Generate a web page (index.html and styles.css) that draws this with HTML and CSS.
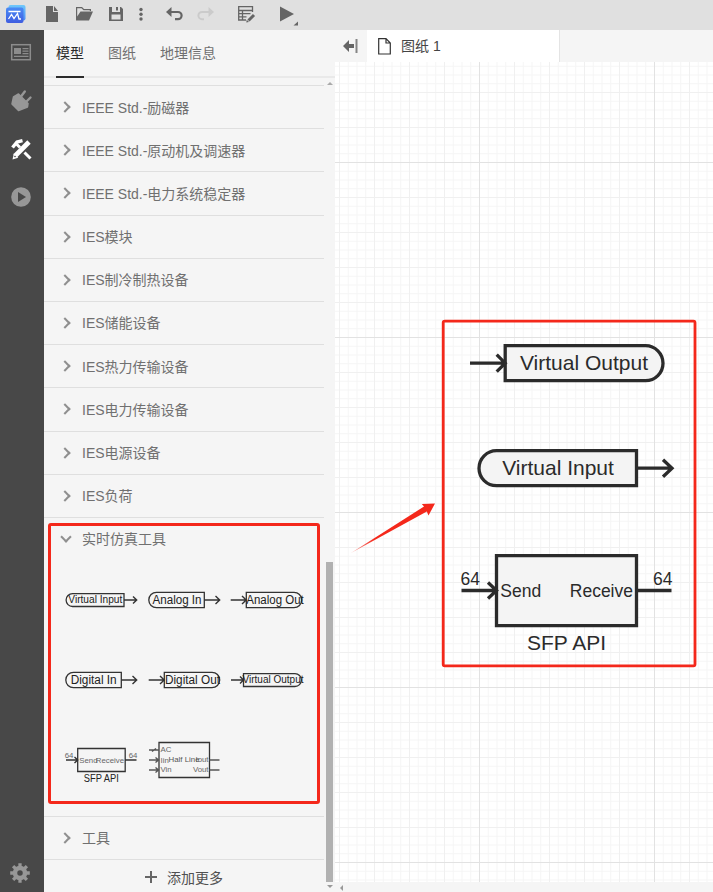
FILE: index.html
```html
<!DOCTYPE html>
<html lang="zh-CN">
<head>
<meta charset="utf-8">
<title>模型</title>
<link rel="stylesheet" href="styles.css">
</head>
<body>
<div class="app">
  <header class="toolbar">
    <svg width="310" height="30" viewBox="0 0 310 30">
      <defs>
        <linearGradient id="logo-back" x1="0" y1="0" x2="0" y2="1"><stop offset="0" stop-color="#6fc8fa"/><stop offset="1" stop-color="#4d8df5"/></linearGradient>
        <linearGradient id="logo-front" x1="0" y1="0" x2="0" y2="1"><stop offset="0" stop-color="#4a8bf5"/><stop offset="1" stop-color="#3f5de0"/></linearGradient>
      </defs>
      <rect x="8.500" y="5" width="17" height="15.500" rx="2" fill="url(#logo-back)"/>
      <rect x="6" y="7.500" width="17.500" height="15.500" rx="2" fill="url(#logo-front)"/>
      <path d="M8.500 11.500H20.500M8.500 19l3-4.500 2.500 4 3.500-5 1.500 5.500h2" fill="none" stroke="#fff" stroke-width="1.300"/>
      <g fill="#656565">
        <path d="M46 6h7v6h5v10H46zM54 6l4 5h-4z"/>
        <path d="M76 7h6l2 2h7v2h-1.200v-.8h-6.300l-2-2H77.200v8.300L80.500 11.500h12.500L89 20.500H76z"/>
        <path d="M109 7h12l2 2v12h-14zM112 7v5h8V7h-2v3.500h-2V7zM111.500 14.500v5h9v-5z" fill-rule="evenodd"/>
        <circle cx="141" cy="9.500" r="1.700"/><circle cx="141" cy="14.300" r="1.700"/><circle cx="141" cy="19" r="1.700"/>
        <path d="M166 12l5.500-5v10z"/>
        <path d="M280 6.500v15L294 14zM298 21.500v4h-4.500z"/>
      </g>
      <path d="M170 12h8a3.600 3.600 0 0 1 0 7.200H175" fill="none" stroke="#656565" stroke-width="2.200"/>
      <path d="M214 12l-5.500-5v10z" fill="#cbcbcb"/>
      <path d="M210 12h-8a3.600 3.600 0 0 0 0 7.200h2" fill="none" stroke="#cbcbcb" stroke-width="2"/>
      <g fill="none" stroke="#656565" stroke-width="1.300">
        <path d="M252.500 12V6.700h-13.800v13.300H246M238.500 10.500h14M242.500 10.500v9.500M238.500 13.700h12M238.500 16.800h8"/>
        <path d="M248.500 20.500l5.500-5.500" stroke-width="3"/>
        <path d="M246.300 22.500l.4-2.800 2.300 2.300z" fill="#656565" stroke="none"/>
      </g>
    </svg>
  </header>

  <div class="workspace">
    <nav class="rail">
      <svg width="44" height="190" viewBox="0 30 44 190">
        <rect x="11.700" y="44.700" width="18.600" height="15" fill="none" stroke="#8c8c8c" stroke-width="1.500"/>
        <path d="M14 48h7v6h-7zM22.500 48h6v1.300h-6zM22.500 50.500h6v1.300h-6zM22.500 53h6v1.300h-6zM14 55.700h14.500V57H14z" fill="#8c8c8c"/>
        <path d="M18.500 94l9.500 9.500-.5 3.500-9 3.500-6.500-6.500 1.500-7z" fill="#979797" stroke="#979797" stroke-width="1.500" stroke-linejoin="round"/>
        <path d="M21 96.500L24.800 91.500M26.500 101.500l4-4" stroke="#979797" stroke-width="2.400" stroke-linecap="round"/>
        <g fill="none" stroke="#fff">
          <path d="M16.500 144l3.500 3.500M24.500 152.500l6 6" stroke-width="3"/>
          <path d="M12.500 147.500l4.500-5.500 5.500-1.300" stroke-width="3.400"/>
          <path d="M29 142L15 156" stroke-width="4.800"/>
          <path d="M12.500 159.500l1.300-6 4.400 4.200z" fill="#fff" stroke="none"/>
          <circle cx="15" cy="156.500" r=".6" fill="#484848" stroke="#484848" stroke-width=".5"/>
        </g>
        <circle cx="21" cy="197" r="9.800" fill="#979797"/><path d="M18 192v10l8-5z" fill="#484848"/>
      </svg>
      <svg class="gear" width="44" height="38" viewBox="0 854 44 38">
        <g transform="translate(20 873)" stroke="#979797" fill="none">
          <circle r="5" stroke-width="4.500"/>
          <path d="M0-9.800V-6M0 9.800V6M-9.800 0H-6M9.800 0H6M-6.900-6.900l2.500 2.500M6.900 6.900L4.400 4.400M-6.900 6.900l2.500-2.500M6.900-6.900L4.400-4.400" stroke-width="3.300"/>
        </g>
      </svg>
    </nav>

    <aside class="panel">
      <div class="tabs"><span class="tab active">模型</span><span class="tab">图纸</span><span class="tab">地理信息</span></div>
      <div class="scroller">
        <div class="list">
          <div class="row"><i class="chev"></i>IEEE Std.-励磁器</div>
          <div class="row"><i class="chev"></i>IEEE Std.-原动机及调速器</div>
          <div class="row"><i class="chev"></i>IEEE Std.-电力系统稳定器</div>
          <div class="row"><i class="chev"></i>IES模块</div>
          <div class="row"><i class="chev"></i>IES制冷制热设备</div>
          <div class="row"><i class="chev"></i>IES储能设备</div>
          <div class="row"><i class="chev"></i>IES热力传输设备</div>
          <div class="row"><i class="chev"></i>IES电力传输设备</div>
          <div class="row"><i class="chev"></i>IES电源设备</div>
          <div class="row"><i class="chev"></i>IES负荷</div>
          <section class="group">
            <div class="row"><i class="chev open"></i>实时仿真工具</div>
            <div class="thumbs">
              <svg viewBox="60 560 82 80"><path class="box" d="M124 593.700H72.500a6.300 6.300 0 0 0 0 12.800H124z"/><path class="wire" d="M124 600h13M133 596.500l3.700 3.500-3.700 3.500"/><text x="95.300" y="603.300" font-size="10" text-anchor="middle" textLength="54" lengthAdjust="spacingAndGlyphs">Virtual Input</text></svg>
              <svg viewBox="142 560 82 80"><path class="box" d="M204.300 592.300H156.500a7.700 7.700 0 0 0 0 15.400H204.300z"/><path class="wire" d="M204 600h16M215.500 596l4.200 4-4.200 4"/><text x="177" y="604.300" font-size="12" text-anchor="middle" textLength="49" lengthAdjust="spacingAndGlyphs">Analog In</text></svg>
              <svg viewBox="224 560 82 80"><path class="box" d="M246.300 592.300H294a7.700 7.700 0 0 1 0 15.400H246.300z"/><path class="wire" d="M230.700 600h16M242 596l4.200 4-4.200 4"/><text x="275" y="604.300" font-size="12" text-anchor="middle" textLength="57.500" lengthAdjust="spacingAndGlyphs">Analog Out</text></svg>
              <svg viewBox="60 640 82 80"><path class="box" d="M121.300 672.300H73.500a7.700 7.700 0 0 0 0 15.400H121.300z"/><path class="wire" d="M121 680h16M132.500 676l4.200 4-4.200 4"/><text x="93.700" y="684.300" font-size="12" text-anchor="middle" textLength="46" lengthAdjust="spacingAndGlyphs">Digital In</text></svg>
              <svg viewBox="142 640 82 80"><path class="box" d="M164.300 672.300H212a7.700 7.700 0 0 1 0 15.400H164.300z"/><path class="wire" d="M148.700 680h16M160 676l4.200 4-4.200 4"/><text x="192.500" y="684.300" font-size="12" text-anchor="middle" textLength="55" lengthAdjust="spacingAndGlyphs">Digital Out</text></svg>
              <svg viewBox="224 640 82 80"><path class="box" d="M243.500 673.700H295a6.300 6.300 0 0 1 0 12.800H243.500z"/><path class="wire" d="M231 680h12.500M240 676.500l3.500 3.500-3.500 3.500"/><text x="273" y="683.300" font-size="10" text-anchor="middle" textLength="61" lengthAdjust="spacingAndGlyphs">Virtual Output</text></svg>
              <svg viewBox="60 720 82 80"><path class="box" d="M77.700 748.500h47.500v23H77.700z"/><path class="wire" d="M66 760h12M74.500 757l3.200 3-3.200 3M125 760h11.500"/><g class="small"><text x="64.700" y="758">64</text><text x="128.700" y="758">64</text><text x="79.300" y="763">Send</text><text x="124" y="763" text-anchor="end">Receive</text></g><text x="101.300" y="782" font-size="10" text-anchor="middle" textLength="35" lengthAdjust="spacingAndGlyphs">SFP API</text></svg>
              <svg viewBox="142 720 82 80"><path class="box" d="M159 742.500h50.500v35H159z"/><path class="wire thin" d="M149 750h10M149 760h10M149 770h10M155.500 757.500l3 2.500-3 2.500M155.500 767.500l3 2.500-3 2.500M209.500 760h10M209.500 770h10M152 751.500l4-3"/><g class="small"><text x="160.500" y="752.300">AC</text><text x="160.500" y="762.500">Iin</text><text x="160.500" y="772.300">Vin</text><text x="208.500" y="762" text-anchor="end">Iout</text><text x="208.500" y="772.300" text-anchor="end">Vout</text></g><text class="soft" x="184" y="762" font-size="8" text-anchor="middle" textLength="31" lengthAdjust="spacingAndGlyphs">Half Line</text></svg>
            </div>
          </section>
          <div class="row"><i class="chev"></i>工具</div>
          <div class="more"><i class="plus"></i>添加更多</div>
        </div>
        <div class="scrollbar"><i class="up"></i><i class="thumb"></i><i class="down"></i></div>
      </div>
      <div class="mark"></div>
    </aside>

    <main class="editor">
      <div class="sheetbar">
        <div class="collapse"><svg width="16" height="14" viewBox="0 0 16 14"><path d="M0 7l6-6v4h5v4H6v4z" fill="#656565"/><path d="M13.500 0v14" stroke="#858585" stroke-width="2"/></svg></div>
        <div class="sheet"><svg width="13" height="17" viewBox="0 0 13 17"><path d="M.7.700H8L12.300 5v11H.7zM8 .7V5h4.300" fill="none" stroke="#333" stroke-width="1.200"/></svg><span>图纸 1</span></div>
      </div>
      <svg class="canvas" width="378" height="820" viewBox="335 62 378 820">
        <defs>
          <pattern id="minor" patternUnits="userSpaceOnUse" x="479" y="162" width="8.750" height="8.750"><path d="M0 .5H8.750M.5 0V8.750" stroke="#f5f5f5" fill="none"/></pattern>
          <pattern id="mid" patternUnits="userSpaceOnUse" x="479" y="162" width="35" height="35"><path d="M0 .5H35M.5 0V35" stroke="#f0f0f0" fill="none"/></pattern>
          <pattern id="major" patternUnits="userSpaceOnUse" x="479" y="162" width="175" height="175"><path d="M0 .5H175M.5 0V175" stroke="#e2e2e2" fill="none"/></pattern>
          <linearGradient id="fade" gradientUnits="userSpaceOnUse" x1="351" y1="553" x2="375" y2="540"><stop offset="0" stop-color="#f4281b" stop-opacity=".4"/><stop offset="1" stop-color="#f4281b"/></linearGradient>
        </defs>
        <rect x="335" y="62" width="378" height="820" fill="#fff"/>
        <rect x="335" y="62" width="378" height="820" fill="url(#minor)"/>
        <rect x="335" y="62" width="378" height="820" fill="url(#mid)"/>
        <rect x="335" y="62" width="378" height="820" fill="url(#major)"/>
        <g class="part">
          <path d="M505.200 345.700H645.500a17.500 17.500 0 0 1 0 35H505.200z"/>
          <path class="lead" d="M470 363.200h36M496.700 354.700l8.500 8.500-8.500 8.500"/>
          <text x="584" y="370" text-anchor="middle">Virtual Output</text>
        </g>
        <g class="part">
          <path d="M636.500 450.700H496.500a17.500 17.500 0 0 0 0 35H636.500z"/>
          <path class="lead" d="M637 468.200h35M663 459.700l9 8.500-9 8.500"/>
          <text x="558" y="475" text-anchor="middle">Virtual Input</text>
        </g>
        <g class="part">
          <path d="M496.500 555.700H636.500v70H496.500z"/>
          <path class="lead" d="M461.500 590.500h35M488 582.500l8.500 8-8.500 8M636.500 590.500h35"/>
          <g class="port"><text x="460.500" y="585">64</text><text x="653" y="585">64</text><text x="500.300" y="597">Send</text><text x="633" y="597" text-anchor="end">Receive</text></g>
          <text x="566.500" y="650" text-anchor="middle">SFP API</text>
        </g>
        <rect x="443.200" y="321.200" width="251.800" height="344.600" rx="1.500" fill="none" stroke="#f4281b" stroke-width="2.800"/>
        <path d="M351 553L424 506.500L421.800 504L435 503.500L428.500 515.500L426.800 511.500Z" fill="url(#fade)"/>
      </svg>
      <div class="hbar"><i></i></div>
    </main>
  </div>
</div>
</body>
</html>
```

FILE: styles.css
```css
* { box-sizing: border-box; }
body { margin: 0; font: 14px "Liberation Sans", "Noto Sans CJK SC", sans-serif; color: #707070; }
svg { display: block; flex: none; }
.app { display: flex; flex-direction: column; height: 892px; overflow: hidden; }
.toolbar { height: 30px; flex: none; background: #e0e0e0; }
.workspace { display: flex; flex: 1; min-height: 0; }

.rail { width: 44px; flex: none; background: #484848; display: flex; flex-direction: column; justify-content: space-between; }

.panel { width: 291px; flex: none; background: #f5f5f5; display: flex; flex-direction: column; position: relative; }
.tabs { height: 48px; flex: none; display: flex; gap: 24px; padding-left: 12px; border-bottom: 2px solid #e9e9e9; }
.tab { height: 48px; line-height: 46px; border-bottom: 2px solid transparent; }
.tab.active { color: #2b2b2b; border-color: #2b2b2b; }
.scroller { flex: 1; min-height: 0; display: flex; padding-top: 7px; }
.list { width: 280px; }
.row { height: 43.2px; display: flex; align-items: center; gap: 12px; padding: 0 0 1.200px 18px; border-top: 1px solid #dfdfdf; font-size: 14px; }
.chev { width: 8px; height: 8px; margin: 1px 1px 0 -1px; border: solid #8f8f8f; border-width: 2px 2px 0 0; transform: rotate(45deg); flex: none; }
.chev.open { transform: translate(1px, -2px) rotate(135deg); }
.group { height: 299px; }
.group .row { height: 43px; }
.thumbs { display: grid; grid-template-columns: repeat(3, 82px); grid-auto-rows: 80px; padding-left: 16px; }
.thumbs svg { width: 82px; height: 80px; overflow: visible; }
.thumbs text { fill: #222; }
.thumbs .small text { fill: #666; font-size: 7.800px; }
.thumbs .soft { fill: #555; }
.box { fill: none; stroke: #333; stroke-width: 1.300; }
.wire { fill: none; stroke: #333; stroke-width: 1.400; }
.wire.thin { stroke: #555; }
.more { display: flex; align-items: center; gap: 10px; height: 34px; padding-left: 101px; border-top: 1px solid #dfdfdf; color: #505050; }
.plus { width: 12px; height: 12px; margin-top: 1px; background: linear-gradient(#666, #666) center / 12px 2px no-repeat, linear-gradient(#666, #666) center / 2px 12px no-repeat; }
.scrollbar { width: 7px; margin: -3px 0 0 2px; display: flex; flex-direction: column; justify-content: flex-end; align-items: center; }
.scrollbar .up { border: 3px solid transparent; border-top-width: 0; border-bottom: 3px solid #aaa; margin-bottom: auto; }
.scrollbar .thumb { width: 7px; height: 320px; background: #b1b1b1; }
.scrollbar .down { border: 3px solid transparent; border-bottom-width: 0; border-top: 3px solid #999; margin: 3px 0 4px; }
.mark { position: absolute; left: 4px; top: 492.500px; width: 272px; height: 281px; border: 3px solid #f4281b; border-radius: 3px; }

.editor { flex: 1; min-width: 0; display: flex; flex-direction: column; background: #f5f5f5; }
.sheetbar { height: 32px; flex: none; display: flex; }
.collapse { width: 32px; padding: 9px 0 0 8px; }
.sheet { width: 193px; background: #fff; border-right: 1px solid #e4e4e4; display: flex; align-items: center; gap: 10px; padding-left: 11px; color: #444; }
.sheet span { padding-bottom: 2px; }
.canvas text { font-size: 21px; fill: #2b2b2b; }
.canvas .port text { font-size: 17.500px; }
.part path { fill: #f4f4f4; stroke: #2b2b2b; stroke-width: 3.300; }
.part .lead { fill: none; }
.hbar { height: 10px; padding: 3px 0 0 5px; }
.hbar i { display: block; width: 0; border: 3px solid transparent; border-left-width: 0; border-right: 3px solid #999; }
```
